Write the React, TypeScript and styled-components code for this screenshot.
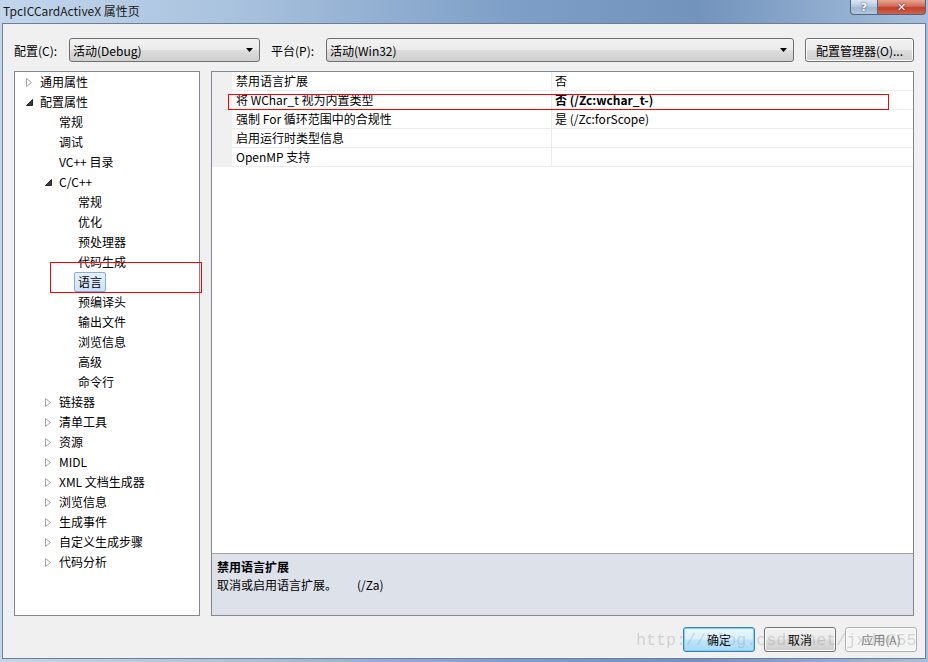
import React from "react";
import styled, { createGlobalStyle } from "styled-components";

const GlobalStyle = createGlobalStyle`
  html, body {
    margin: 0;
    padding: 0;
    background: #fff;
  }
  * {
    box-sizing: border-box;
  }
`;

const FONT = `"Noto Sans CJK SC", "Noto Sans", sans-serif`;

const Window = styled.div`
  position: relative;
  width: 928px;
  height: 662px;
  display: flex;
  flex-direction: column;
  overflow: hidden;
  font-family: ${FONT};
  font-size: 12px;
  color: #000;
  background: linear-gradient(
    90deg,
    #c3d6ec 0%,
    #a9c2de 25%,
    #7e9fc7 55%,
    #7293bc 75%,
    #a6bfdc 100%
  );
`;

const TitleBar = styled.div`
  height: 23px;
  display: flex;
  align-items: flex-start;
  justify-content: space-between;
  padding-left: 3px;
`;

const Caption = styled.div`
  line-height: 22px;
  font-size: 12px;
  color: #1a1a1a;
`;

const CaptionButtons = styled.div`
  display: flex;
  margin-right: 2px;
`;

const CaptionButton = styled.div<{ $close?: boolean }>`
  width: ${({ $close }) => ($close ? "48px" : "28px")};
  height: 15px;
  display: flex;
  align-items: center;
  justify-content: center;
  font-family: "DejaVu Sans", sans-serif;
  font-weight: bold;
  font-size: 11px;
  color: #fff;
  border: 1px solid #4f6580;
  border-top: none;
  border-left: ${({ $close }) => ($close ? "none" : "1px solid #4f6580")};
  border-radius: ${({ $close }) => ($close ? "0 0 4px 0" : "0 0 0 4px")};
  text-shadow: 0 0 2px #223;
  background: ${({ $close }) =>
    $close
      ? "linear-gradient(180deg, #e8a493 0%, #d46a55 45%, #c0402b 55%, #d2644a 100%)"
      : "linear-gradient(180deg, #dbe6f2 0%, #b6c9df 45%, #9fb6d2 55%, #b4c8df 100%)"};
`;

const Client = styled.div`
  flex: 1;
  margin: 0 2px 3px 2px;
  border: 1px solid #6e7f94;
  background: #f0f0f0;
  display: flex;
  flex-direction: column;
  padding: 14px 11px 6px 11px;
`;

const Toolbar = styled.div`
  height: 24px;
  display: flex;
  align-items: center;
`;

const FieldLabel = styled.div<{ $gap?: number }>`
  width: 55px;
  margin-left: ${({ $gap }) => $gap ?? 0}px;
  white-space: nowrap;
`;

const Combo = styled.div<{ $width?: number }>`
  height: 24px;
  ${({ $width }) => ($width ? `width: ${$width}px;` : "flex: 1;")}
  display: flex;
  align-items: center;
  justify-content: space-between;
  padding: 0 6px 0 3px;
  border: 1px solid #707070;
  border-radius: 3px;
  background: linear-gradient(180deg, #f2f2f2 0%, #ebebeb 48%, #dddddd 52%, #cfcfcf 100%);
`;

const ComboArrow = () => (
  <svg width="7" height="4" viewBox="0 0 7 4">
    <path d="M0 0 H7 L3.5 4 Z" fill="#000" />
  </svg>
);

const PushButton = styled.div<{ $default?: boolean; $disabled?: boolean }>`
  height: 25px;
  width: 72px;
  display: flex;
  align-items: center;
  justify-content: center;
  border-radius: 3px;
  border: 1px solid
    ${({ $default, $disabled }) => ($default ? "#3c7fb1" : $disabled ? "#adb2b5" : "#707070")};
  color: ${({ $disabled }) => ($disabled ? "#838383" : "#000")};
  background: ${({ $default, $disabled }) =>
    $default
      ? "linear-gradient(180deg, #eaf6fd 0%, #d9f0fc 48%, #bee6fd 52%, #a7d9f5 100%)"
      : $disabled
      ? "#f4f4f4"
      : "linear-gradient(180deg, #f2f2f2 0%, #ebebeb 48%, #dddddd 52%, #cfcfcf 100%)"};
  box-shadow: ${({ $default }) => ($default ? "inset 0 0 0 1px #7fd0f5" : "inset 0 0 0 1px #fcfcfc")};
`;

const ManagerButton = styled(PushButton)`
  width: 109px;
  height: 24px;
  margin-left: 11px;
`;

const Main = styled.div`
  flex: 1;
  margin-top: 9px;
  display: flex;
  gap: 11px;
  min-height: 0;
`;

const Tree = styled.div`
  width: 186px;
  background: #fff;
  border: 1px solid #828790;
`;

const TreeRow = styled.div<{ $level: number }>`
  height: 20px;
  display: flex;
  align-items: center;
  padding-left: ${({ $level }) => 11 + $level * 19}px;
  white-space: nowrap;
`;

const Expander = styled.div`
  width: 14px;
  height: 20px;
  display: flex;
  align-items: center;
`;

const TreeText = styled.span<{ $selected?: boolean }>`
  line-height: 18px;
  margin-left: -4px;
  padding: 0 3px;
  border: 1px solid ${({ $selected }) => ($selected ? "#84acdd" : "transparent")};
  border-radius: 2px;
  background: ${({ $selected }) =>
    $selected ? "linear-gradient(180deg, #e6f0fd 0%, #cfe2fb 100%)" : "transparent"};
`;

const Collapsed = () => (
  <svg width="6" height="9" viewBox="0 0 6 9">
    <path d="M0.5 0.5 L5.5 4.5 L0.5 8.5 Z" fill="#fff" stroke="#a3a3a3" />
  </svg>
);

const Expanded = () => (
  <svg width="7" height="7" viewBox="0 0 7 7">
    <path d="M6.5 0.5 V6.5 H0.5 Z" fill="#3c3c3c" stroke="#262626" strokeLinejoin="round" />
  </svg>
);

const RightPanel = styled.div`
  flex: 1;
  display: flex;
  flex-direction: column;
  border: 1px solid #828790;
  background: #fff;
`;

const Grid = styled.div`
  flex: 1;
  background: #fff;
`;

const GridRow = styled.div`
  height: 19px;
  display: grid;
  grid-template-columns: 20px 319px 1fr;
`;

const Gutter = styled.div`
  background: #f0f0f0;
`;

const Cell = styled.div<{ $value?: boolean; $bold?: boolean }>`
  background: #fff;
  border-bottom: 1px solid #ececec;
  border-left: ${({ $value }) => ($value ? "1px solid #ececec" : "none")};
  padding-left: ${({ $value }) => ($value ? "3px" : "4px")};
  line-height: 18px;
  font-weight: ${({ $bold }) => ($bold ? "bold" : "normal")};
  white-space: nowrap;
`;

const Description = styled.div`
  height: 62px;
  border-top: 1px solid #a0a0a0;
  background: #dde1e9;
  padding: 4px 5px 0 5px;
  line-height: 18px;
`;

const DescTitle = styled.div`
  font-weight: bold;
`;

const DescFlag = styled.span`
  margin-left: 20px;
`;

const Footer = styled.div`
  margin-top: 11px;
  margin-right: -3px;
  display: flex;
  justify-content: flex-end;
  gap: 9px;
`;

const RedBox = styled.div<{ $x: number; $y: number; $w: number; $h: number }>`
  position: absolute;
  left: ${({ $x }) => $x}px;
  top: ${({ $y }) => $y}px;
  width: ${({ $w }) => $w}px;
  height: ${({ $h }) => $h}px;
  border: 1px solid #ff0000;
  pointer-events: none;
`;

const Watermark = styled.div`
  position: absolute;
  left: 636px;
  top: 628px;
  font-family: "Liberation Mono", monospace;
  font-size: 16.7px;
  line-height: 26px;
  color: rgba(150, 150, 150, 0.35);
  pointer-events: none;
  white-space: nowrap;
`;

type Node = { label: string; level: number; arrow?: "open" | "closed"; selected?: boolean };

const treeItems: Node[] = [
  { label: "通用属性", level: 0, arrow: "closed" },
  { label: "配置属性", level: 0, arrow: "open" },
  { label: "常规", level: 1 },
  { label: "调试", level: 1 },
  { label: "VC++ 目录", level: 1 },
  { label: "C/C++", level: 1, arrow: "open" },
  { label: "常规", level: 2 },
  { label: "优化", level: 2 },
  { label: "预处理器", level: 2 },
  { label: "代码生成", level: 2 },
  { label: "语言", level: 2, selected: true },
  { label: "预编译头", level: 2 },
  { label: "输出文件", level: 2 },
  { label: "浏览信息", level: 2 },
  { label: "高级", level: 2 },
  { label: "命令行", level: 2 },
  { label: "链接器", level: 1, arrow: "closed" },
  { label: "清单工具", level: 1, arrow: "closed" },
  { label: "资源", level: 1, arrow: "closed" },
  { label: "MIDL", level: 1, arrow: "closed" },
  { label: "XML 文档生成器", level: 1, arrow: "closed" },
  { label: "浏览信息", level: 1, arrow: "closed" },
  { label: "生成事件", level: 1, arrow: "closed" },
  { label: "自定义生成步骤", level: 1, arrow: "closed" },
  { label: "代码分析", level: 1, arrow: "closed" },
];

const props: { name: string; value: string; bold?: boolean }[] = [
  { name: "禁用语言扩展", value: "否" },
  { name: "将 WChar_t 视为内置类型", value: "否 (/Zc:wchar_t-)", bold: true },
  { name: "强制 For 循环范围中的合规性", value: "是 (/Zc:forScope)" },
  { name: "启用运行时类型信息", value: "" },
  { name: "OpenMP 支持", value: "" },
];

export default function App() {
  return (
    <Window>
      <GlobalStyle />
      <TitleBar>
        <Caption>TpcICCardActiveX 属性页</Caption>
        <CaptionButtons>
          <CaptionButton>?</CaptionButton>
          <CaptionButton $close>✕</CaptionButton>
        </CaptionButtons>
      </TitleBar>
      <Client>
        <Toolbar>
          <FieldLabel>配置(C):</FieldLabel>
          <Combo $width={191}>
            <span>活动(Debug)</span>
            <ComboArrow />
          </Combo>
          <FieldLabel $gap={11}>平台(P):</FieldLabel>
          <Combo>
            <span>活动(Win32)</span>
            <ComboArrow />
          </Combo>
          <ManagerButton>配置管理器(O)...</ManagerButton>
        </Toolbar>
        <Main>
          <Tree>
            {treeItems.map((n, i) => (
              <TreeRow key={i} $level={n.level}>
                <Expander>
                  {n.arrow === "open" ? <Expanded /> : n.arrow === "closed" ? <Collapsed /> : null}
                </Expander>
                <TreeText $selected={n.selected}>{n.label}</TreeText>
              </TreeRow>
            ))}
          </Tree>
          <RightPanel>
            <Grid>
              {props.map((p, i) => (
                <GridRow key={i}>
                  <Gutter />
                  <Cell>{p.name}</Cell>
                  <Cell $value $bold={p.bold}>
                    {p.value}
                  </Cell>
                </GridRow>
              ))}
            </Grid>
            <Description>
              <DescTitle>禁用语言扩展</DescTitle>
              <div>
                取消或启用语言扩展。<DescFlag>(/Za)</DescFlag>
              </div>
            </Description>
          </RightPanel>
        </Main>
        <Footer>
          <PushButton $default>确定</PushButton>
          <PushButton>取消</PushButton>
          <PushButton $disabled>应用(A)</PushButton>
        </Footer>
      </Client>
      <RedBox $x={50} $y={262} $w={152} $h={31} />
      <RedBox $x={228} $y={94} $w={661} $h={16} />
      <Watermark>http://blog.csdn.net/jxd0655</Watermark>
    </Window>
  );
}
